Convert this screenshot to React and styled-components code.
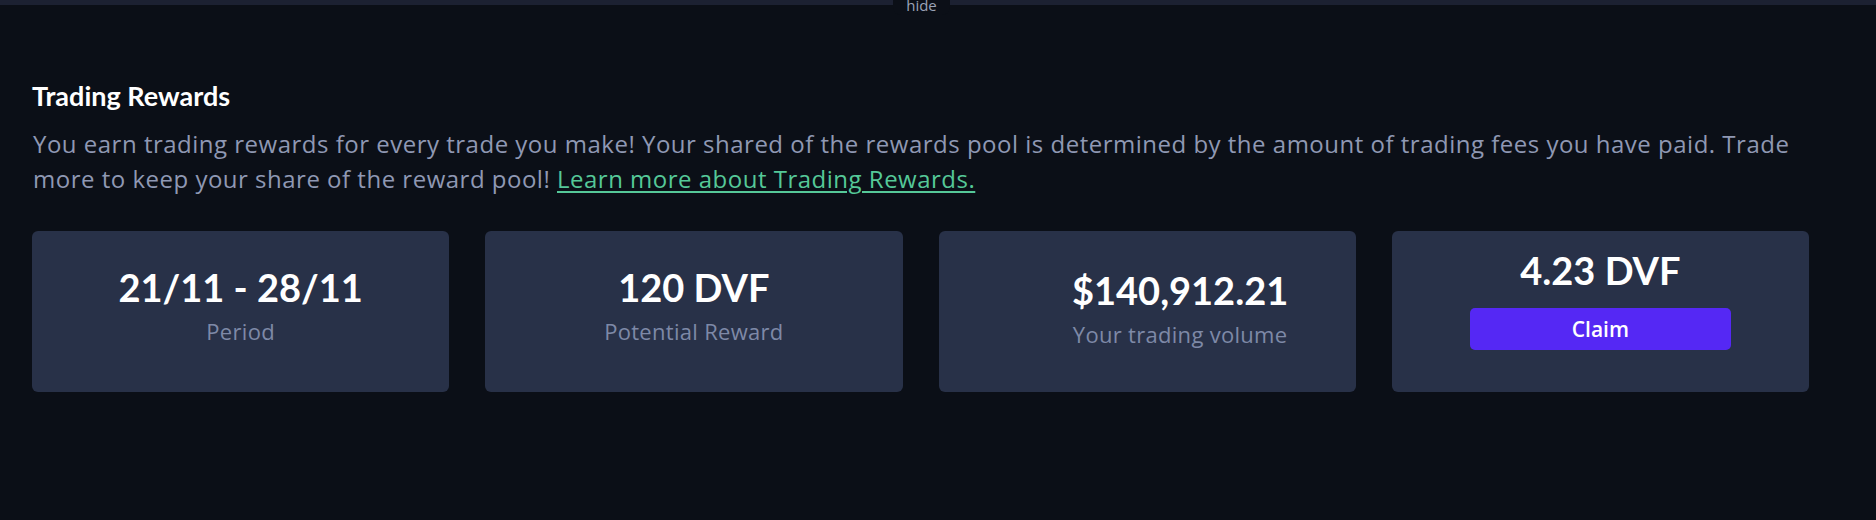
import React from "react";
import styled, { createGlobalStyle } from "styled-components";

const GlobalStyle = createGlobalStyle`
  html, body {
    margin: 0;
    padding: 0;
    background: #0b0f17;
  }
  #root {
    min-height: 520px;
    background: #0b0f17;
  }
`;

const stats = [
  { value: "21/11 - 28/11", label: "Period", top: 34 },
  { value: "120 DVF", label: "Potential Reward", top: 34 },
  { value: "$140,912.21", label: "Your trading volume", top: 37, shift: 66 },
  { value: "4.23 DVF", claim: true, top: 17 },
];

export default function App() {
  return (
    <>
      <GlobalStyle />
      <Page>
        <TopStrip>
          <StripTitle>Transparent</StripTitle>
        </TopStrip>
        <HideTab>hide</HideTab>
        <Section>
          <Heading>Trading Rewards</Heading>
          <Text>
            You earn trading rewards for every trade you make! Your shared of
            the rewards pool is determined by the amount of trading fees you
            have paid. Trade more to keep your share of the reward pool!{" "}
            <Link href="#">Learn more about Trading Rewards.</Link>
          </Text>
          <Cards>
            {stats.map((s) => (
              <Card key={s.value} $top={s.top} $shift={s.shift || 0}>
                <Value>{s.value}</Value>
                {s.claim ? (
                  <ClaimButton>Claim</ClaimButton>
                ) : (
                  <Label>{s.label}</Label>
                )}
              </Card>
            ))}
          </Cards>
        </Section>
      </Page>
    </>
  );
}

const Page = styled.div`
  position: relative;
  width: 100%;
  height: 520px;
  overflow: hidden;
  background: #0b0f17;
`;

// bottom edge of the scrolled-away panel above
const TopStrip = styled.div`
  height: 5px;
  overflow: hidden;
  background: #1c2132;
  padding-left: 35px;
`;

const StripTitle = styled.div`
  font-family: "Open Sans", sans-serif;
  font-weight: 600;
  font-size: 20px;
  line-height: 20px;
  letter-spacing: 3px;
  text-transform: uppercase;
  color: #c3c8d4;
  transform: translateY(-17px);
`;

const HideTab = styled.div`
  position: absolute;
  top: 0;
  left: 893px;
  width: 57px;
  height: 15px;
  background: #0b0f17;
  border-radius: 0 0 8px 8px;
  font-family: "Open Sans", sans-serif;
  font-size: 15px;
  line-height: 11px;
  text-align: center;
  color: #9aa2b6;
`;

const Section = styled.section`
  padding: 75px 0 0 32px;
  width: 1777px;
`;

const Heading = styled.h2`
  margin: 0;
  font-family: Lato, sans-serif;
  font-weight: 700;
  font-size: 27px;
  line-height: 1.2;
  color: #ffffff;
`;

const Text = styled.p`
  margin: 14px 0 0;
  padding-left: 1px;
  font-family: "Open Sans", sans-serif;
  font-size: 24px;
  letter-spacing: 0.5px;
  line-height: 35px;
  color: #8f98b3;
`;

const Link = styled.a`
  color: #55c898;
  text-decoration: underline;
  text-underline-offset: 3px;
`;

const Cards = styled.div`
  display: grid;
  grid-template-columns: repeat(4, 1fr);
  gap: 36px;
  margin-top: 35px;
`;

const Card = styled.div`
  height: 161px;
  box-sizing: border-box;
  padding-top: ${(p) => p.$top}px;
  padding-left: ${(p) => p.$shift}px;
  display: flex;
  flex-direction: column;
  align-items: center;
  background: #283148;
  border-radius: 6px;
`;

const Value = styled.div`
  font-family: Lato, sans-serif;
  font-weight: 700;
  font-size: 38px;
  line-height: 1.2;
  color: #ffffff;
`;

const Label = styled.div`
  margin-top: 6px;
  font-family: "Open Sans", sans-serif;
  font-size: 22px;
  letter-spacing: 0.3px;
  line-height: 28px;
  color: #7e89a7;
`;

const ClaimButton = styled.button`
  margin-top: 14px;
  width: 261px;
  height: 42px;
  border: none;
  border-radius: 5px;
  background: #5528f4;
  color: #ffffff;
  font-family: "Open Sans", sans-serif;
  font-weight: 600;
  font-size: 21px;
  cursor: pointer;
`;
